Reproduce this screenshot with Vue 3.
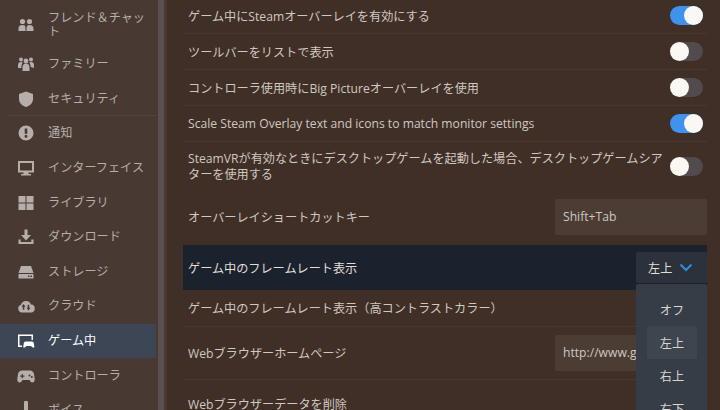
<script setup>
const nav = [
  { t: 'フレンド＆チャット', i: 'friends', tall: true },
  { t: 'ファミリー', i: 'family' },
  { t: 'セキュリティ', i: 'shield', sep: true },
  { t: '通知', i: 'bell' },
  { t: 'インターフェイス', i: 'monitor' },
  { t: 'ライブラリ', i: 'library' },
  { t: 'ダウンロード', i: 'download' },
  { t: 'ストレージ', i: 'storage' },
  { t: 'クラウド', i: 'cloud' },
  { t: 'ゲーム中', i: 'ingame', active: true },
  { t: 'コントローラ', i: 'controller' },
  { t: 'ボイス', i: 'voice' }
]
const rows = [
  { t: 'ゲーム中にSteamオーバーレイを有効にする', on: true },
  { t: 'ツールバーをリストで表示', on: false },
  { t: 'コントローラ使用時にBig Pictureオーバーレイを使用', on: false },
  { t: 'Scale Steam Overlay text and icons to match monitor settings', on: true }
]
</script>

<template>
  <div class="app">
    <aside class="side">
      <ul class="nav">
        <li v-for="n in nav" :key="n.t" class="item" :class="{ tall: n.tall, active: n.active, sep: n.sep }">
          <svg class="ico" viewBox="0 0 18 18" fill="currentColor">
            <template v-if="n.i === 'friends'">
              <circle cx="5.500" cy="5.500" r="2.600" /><circle cx="12.500" cy="5.500" r="2.600" />
              <path d="M1.500 15v-2.500C1.500 10 3 9 5.500 9s3 1 3 3.500V15zM9.500 15v-2.500C9.500 10 10.500 9 12.500 9s4 1 4 3.500V15z" />
            </template>
            <template v-else-if="n.i === 'family'">
              <circle cx="4" cy="4.500" r="2" /><circle cx="14" cy="4.500" r="2" /><circle cx="9" cy="6" r="2.400" />
              <path d="M1 13v-3c0-2 1-3 3-3 .8 0 1.300.2 1.700.5C5 8.500 4.500 10 4.300 13zM17 13v-3c0-2-1-3-3-3-.8 0-1.300.2-1.700.5.7 1 1.200 2.500 1.400 4.500zM5.500 16v-3c0-3 1-4.500 3.500-4.500s3.500 1.500 3.500 4.500v3z" />
            </template>
            <path v-else-if="n.i === 'shield'" d="M9 1.500 16 4v5c0 4-3 6.800-7 8-4-1.200-7-4-7-8V4z" />
            <path v-else-if="n.i === 'bell'" fill-rule="evenodd" d="M9 1.500a7.500 7.500 0 1 1 0 15 7.500 7.500 0 0 1 0-15zM7.700 4.500v5.300h2.600V4.500zM9 10.800a1.500 1.500 0 1 0 0 3 1.500 1.500 0 0 0 0-3z" />
            <path v-else-if="n.i === 'monitor'" fill-rule="evenodd" d="M1 2h16v11.500h-5.500V15H14v1.500H4V15h2.500v-1.500H1zM3 4v7.500h12V4z" />
            <path v-else-if="n.i === 'library'" d="M1.500 2h7v6.500h-7zM9.500 2h7v6.500h-7zM1.500 9.500h7V16h-7zM9.500 9.500h7V16h-7z" />
            <path v-else-if="n.i === 'download'" d="M7.500 1.500h3V7H14l-5 5.500L4 7h3.500zM1.500 11.500h2.200v2.500h10.600v-2.500h2.200v4.500h-15z" />
            <path v-else-if="n.i === 'storage'" fill-rule="evenodd" d="M4 3h10l2.500 7h-15zM1.500 11h15v4.500h-15zM11 12.500v1.500h1.500v-1.500zM13.500 12.500v1.500H15v-1.500z" />
            <path v-else-if="n.i === 'cloud'" fill-rule="evenodd" d="M5 15.500a4 4 0 0 1-1-7.800A5.300 5.300 0 0 1 14 7.500a4 4 0 0 1-.5 8zM6.500 7 4.500 9.800h1.300v3h1.500v-3h1.200zM11.500 13.500 13.500 10.700h-1.300v-3h-1.500v3H9.500z" />
            <template v-else-if="n.i === 'ingame'">
              <path d="M1 2.500h15V8h-1.500V4H2.500v9.500H5v1.500H1z" />
              <path d="M8.500 9.500h6.500c1.200 0 1.800 1 2 2.700l.4 3.300h-1.800L14 14H9.500L8 15.500H6.200l.4-3.300c.2-1.700.8-2.700 1.900-2.700z" />
            </template>
            <path v-else-if="n.i === 'controller'" fill-rule="evenodd" d="M5 3.500h8c2 0 3.500 1.200 4 3.500l.7 5c.2 2-.8 3.500-2.300 3.500-1.200 0-2-.8-2.900-2.500H5.500C4.600 14.700 3.800 15.500 2.600 15.500 1.100 15.500.1 14 .3 12L1 7c.5-2.300 2-3.500 4-3.500zM4.700 7v1.500H3.200v1.200h1.500v1.500h1.200V9.700h1.500V8.500H5.900V7zM12.500 7.500a1 1 0 1 0 0 2 1 1 0 0 0 0-2zM14.800 9a1 1 0 1 0 0 2 1 1 0 0 0 0-2z" />
            <path v-else d="M7 1.500a2 2 0 0 1 4 0v9a2 2 0 0 1-4 0z" />
          </svg>
          <span class="lbl">{{ n.t }}</span>
        </li>
      </ul>
      <div class="bar"></div>
    </aside>

    <main class="main">
      <div v-for="r in rows" :key="r.t" class="row">
        <span class="txt">{{ r.t }}</span>
        <span class="tog" :class="{ on: r.on }"><i></i></span>
      </div>
      <div class="row vr">
        <span class="txt two">SteamVRが有効なときにデスクトップゲームを起動した場合、デスクトップゲームシアターを使用する</span>
        <span class="tog"><i></i></span>
      </div>
      <div class="row inp">
        <span class="txt">オーバーレイショートカットキー</span>
        <span class="box">Shift+Tab</span>
      </div>
      <div class="row fps">
        <span class="txt bright">ゲーム中のフレームレート表示</span>
        <span class="sel">
          <span>左上</span>
          <svg class="chev" viewBox="0 0 14 9"><path d="M1.500 1.500 7 7l5.500-5.500" fill="none" stroke="currentColor" stroke-width="2" /></svg>
        </span>
      </div>
      <div class="row plain">
        <span class="txt">ゲーム中のフレームレート表示（高コントラストカラー）</span>
      </div>
      <div class="row inp web">
        <span class="txt">Webブラウザーホームページ</span>
        <span class="box">http://www.google.com</span>
      </div>
      <div class="row last">
        <span class="txt">Webブラウザーデータを削除</span>
      </div>

      <div class="menu">
        <div class="opt">オフ</div>
        <div class="opt cur">左上</div>
        <div class="opt">右上</div>
        <div class="opt">右下</div>
      </div>
    </main>
  </div>
</template>

<style>
html, body { margin: 0; background: #402f26; }
</style>

<style scoped>
.app {
  width: 720px;
  height: 410px;
  overflow: hidden;
  display: flex;
  background: #402f26;
  font-family: "Open Sans", "Noto Sans CJK JP", sans-serif;
  font-size: 12.150px;
  color: #cfc8c2;
}
.side {
  width: 167px;
  flex: none;
  display: flex;
  background: #483a33;
}
.nav {
  list-style: none;
  margin: 0;
  padding: 0;
  width: 156px;
  flex: none;
}
.item {
  height: 34.600px;
  display: flex;
  align-items: center;
  color: #b5aea9;
  box-sizing: border-box;
}
.item.tall { height: 47px; align-items: flex-start; padding-top: 11px; }
.item.tall .ico { margin-top: 5px; }
.item.sep { position: relative; }
.item.sep::after {
  content: "";
  position: absolute;
  left: 8px;
  right: 0;
  bottom: 0;
  height: 1px;
  background: #54453d;
}
.item.active { background: #3c4654; color: #fff; }
.ico { width: 18px; height: 18px; margin-left: 17px; flex: none; }
.lbl { margin-left: 13px; line-height: 14px; width: 100px; }
.bar { width: 6px; margin-left: 2px; background: #5a5052; }

.main {
  flex: 1;
  position: relative;
  padding: 0 13px 0 16px;
  min-width: 0;
}
.row {
  height: 36px;
  box-sizing: border-box;
  display: flex;
  align-items: center;
  justify-content: space-between;
  border-bottom: 1px solid #48382f;
  padding: 0 4px 0 5px;
}
.row:first-child { height: 34px; padding-bottom: 2px; }
.txt { white-space: nowrap; }
.txt.two { white-space: normal; width: 480px; line-height: 16px; }
.row.vr { height: 46px; border-bottom: 0; padding-top: 3px; }
.row.inp { height: 57px; border-bottom: 0; padding-right: 0; }
.row.fps {
  height: 45px;
  background: #1a222d;
  border-bottom: 0;
  padding-right: 0;
}
.txt.bright { color: #e3ded9; }
.row.plain { height: 37px; }
.row.web { height: 53px; border-bottom: 1px solid #48382f; }
.row.last { height: 48px; border-bottom: 0; }
.box {
  width: 152px;
  height: 36px;
  line-height: 36px;
  padding-left: 8px;
  box-sizing: border-box;
  background: #4b3c34;
  border-radius: 2px;
  overflow: hidden;
  white-space: nowrap;
}
.sel {
  width: 71px;
  height: 31px;
  background: #2b323c;
  border-radius: 2px;
  display: flex;
  align-items: center;
  gap: 7px;
  padding-left: 12px;
  box-sizing: border-box;
  color: #e3ded9;
}
.chev { width: 14px; height: 9px; color: #2f8fd6; }
.tog {
  width: 33px;
  height: 19px;
  border-radius: 10px;
  background: #514b4e;
  position: relative;
  display: block;
  flex: none;
}
.tog i {
  position: absolute;
  left: 0;
  top: 0;
  width: 19px;
  height: 19px;
  border-radius: 50%;
  background: #fbf8f4;
}
.tog.on { background: #3f93ec; }
.tog.on i { left: 14px; }
.menu {
  position: absolute;
  left: 469px;
  top: 284px;
  width: 71px;
  height: 140px;
  background: #373d47;
  border-radius: 2px;
  box-sizing: border-box;
  padding-top: 9px;
}
.opt {
  width: 50px;
  height: 33px;
  margin-left: 11px;
  display: flex;
  align-items: center;
  justify-content: center;
  color: #d8d4d0;
  border-radius: 2px;
}
.opt.cur { background: #3f454f; }
</style>
